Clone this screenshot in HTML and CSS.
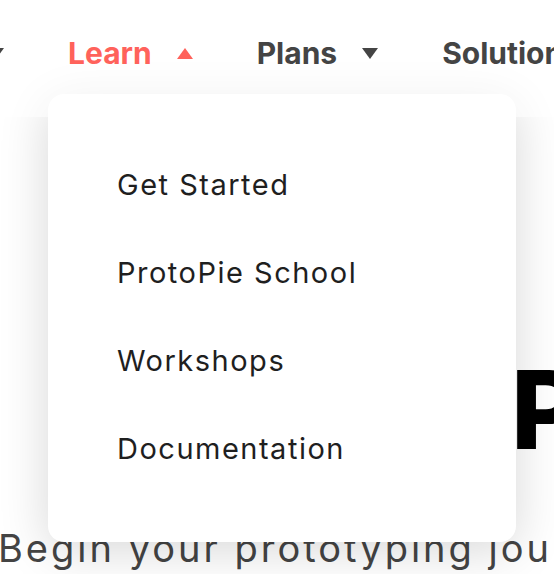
FILE: index.html
```html
<!DOCTYPE html>
<html lang="en">
<head>
<meta charset="utf-8">
<title>ProtoPie - Learn menu</title>
<link rel="stylesheet" href="styles.css">
</head>
<body>
<div class="page">
  <header class="topbar">
    <nav class="nav">
      <div class="nav-prev">
        <a class="nav-item" href="#"><span class="label">Products</span><span class="caret down"></span></a>
      </div>
      <a class="nav-item active" href="#"><span class="label">Learn</span><span class="caret up"></span></a>
      <a class="nav-item" href="#"><span class="label">Plans</span><span class="caret down"></span></a>
      <a class="nav-item" href="#"><span class="label">Solutions</span></a>
    </nav>
  </header>
  <main class="hero">
    <h1 class="hero-title">Prototype</h1>
    <p class="hero-sub">Begin your prototyping journey</p>
  </main>
  <div class="dropdown">
    <ul class="menu">
      <li><a href="#">Get Started</a></li>
      <li><a href="#">ProtoPie School</a></li>
      <li><a href="#">Workshops</a></li>
      <li><a href="#">Documentation</a></li>
    </ul>
  </div>
</div>
</body>
</html>
```
FILE: styles.css
```css
* { box-sizing: border-box; }
html, body { margin: 0; padding: 0; }
body {
  background: #ffffff;
  font-family: Inter, "Noto Sans", sans-serif;
  overflow: hidden;
}
.page {
  position: relative;
  width: 554px;
  height: 574px;
  overflow: hidden;
}
a { text-decoration: none; color: inherit; }

.topbar {
  position: relative;
  z-index: 2;
  height: 117px;
  background: rgba(255, 255, 255, 0.55);
  display: flex;
  align-items: flex-start;
  padding-top: 35px;
}
.nav {
  display: flex;
  align-items: center;
  gap: 64px;
}
.nav-prev {
  width: 4px;
  display: flex;
  justify-content: flex-end;
}
.nav-item {
  display: flex;
  align-items: center;
  gap: 25px;
  white-space: nowrap;
  font-size: 30px;
  font-weight: 700;
  color: #444444;
  line-height: 36px;
}
.nav-item.active { color: #ff625b; }
.caret {
  width: 0;
  height: 0;
  border-left: 8px solid transparent;
  border-right: 8px solid transparent;
}
.caret.down { border-top: 11px solid #444444; }
.caret.up { border-bottom: 11px solid #ff625b; }

.hero {
  position: relative;
  z-index: 0;
}
.hero-title {
  margin: 232px 0 0 0;
  padding-left: 511px;
  font-size: 109px;
  font-weight: 800;
  line-height: 120px;
  color: #000000;
  white-space: nowrap;
}
.hero-sub {
  margin: 57px 0 0 -2px;
  font-size: 38px;
  letter-spacing: 3px;
  line-height: 44px;
  color: #444444;
  white-space: nowrap;
}

.dropdown {
  position: absolute;
  z-index: 1;
  left: 48px;
  top: 94px;
  width: 468px;
  height: 448px;
  background: #ffffff;
  border-radius: 16px;
  box-shadow: 0 8px 50px rgba(0, 0, 0, 0.16);
}
.menu {
  list-style: none;
  margin: 0;
  padding: 67px 0 0 69px;
}
.menu li {
  height: 88px;
  font-size: 29px;
  letter-spacing: 1.5px;
  line-height: 48px;
  color: #1f1f1f;
}
```
